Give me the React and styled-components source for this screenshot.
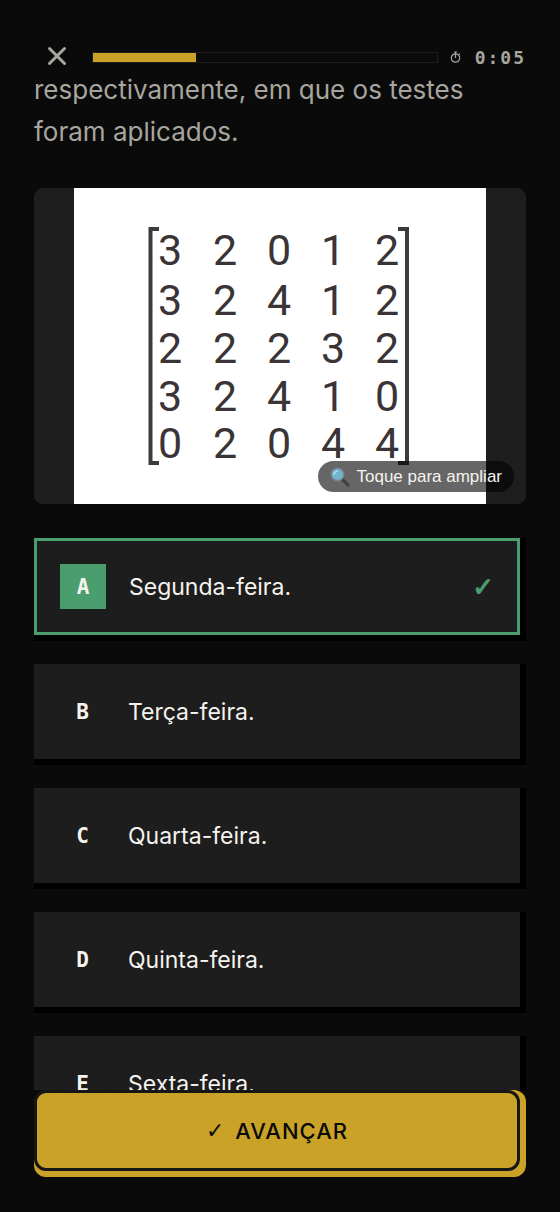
import React, { useState } from 'react'
import styled, { createGlobalStyle } from 'styled-components'
import { X } from 'lucide-react'

const GlobalStyle=createGlobalStyle`
*{
box-sizing: border-box;
}
body{
margin: 0;
background-color: #0a0a0a;
color: #f5f3ee;
font-family: Inter, "Liberation Sans", sans-serif;
}
button{
margin: 0;
padding: 0;
border: none;
background: none;
color: inherit;
font: inherit;
cursor: pointer;
}
`

const Screen=styled.div`
height: 100vh;
display: flex;
flex-direction: column;
overflow: hidden;
`
const Header=styled.header`
display: flex;
align-items: center;
gap: 12px;
padding: 45px 34px 0;
height: 69px;
flex-shrink: 0;
`
const CloseButton=styled.button`
display: flex;
justify-content: center;
width: 46px;
padding-bottom: 2px;
color: #a8a59e;
`
const Track=styled.div`
flex: 1;
height: 11px;
border: 1px solid #1e1e1e;
`
const Fill=styled.div`
height: 100%;
background-color: #c9a227;
`
const Timer=styled.div`
display: flex;
align-items: center;
gap: 14px;
color: #a8a59e;
font-family: "DejaVu Sans Mono", monospace;
font-size: 18px;
font-weight: 700;
letter-spacing: 2px;
`
const Main=styled.main`
flex: 1;
min-height: 0;
overflow: hidden;
padding: 0 34px;
`
const Question=styled.p`
margin: 0 0 35px;
color: #a8a59e;
font-size: 26px;
line-height: 42px;
`
const Figure=styled.button`
position: relative;
display: flex;
justify-content: center;
width: 100%;
height: 316px;
margin-bottom: 34px;
border-radius: 9px;
background-color: #1e1e1e;
overflow: hidden;
`
const ZoomHint=styled.span`
position: absolute;
right: 12px;
bottom: 12px;
display: flex;
align-items: center;
gap: 6px;
height: 31px;
padding: 0 12px;
border-radius: 16px;
background-color: rgba(0, 0, 0, 0.6);
color: #f5f3ee;
font-family: "Liberation Sans", sans-serif;
font-size: 17px;
`
const Options=styled.div`
display: flex;
flex-direction: column;
gap: 23px;
`
const OptionShadow=styled.div`
display: flex;
padding: 0 6px 6px 0;
background-color: #000;
`
const Option=styled.button`
flex: 1;
display: flex;
align-items: center;
gap: 23px;
padding: ${props=>props.$correct ? "23px" : "22px 23px"};
border: 3px solid ${props=>props.$correct ? "#4a9e6e" : "#1d1d1d"};
background-color: #1d1d1d;
text-align: left;
`
const Letter=styled.span`
display: flex;
align-items: center;
justify-content: center;
width: ${props=>props.$correct ? "46px" : "45px"};
height: 45px;
border: 1px solid ${props=>props.$correct ? "#4a9e6e" : "#1a1a1a"};
background-color: ${props=>props.$correct ? "#4a9e6e" : "#1d1d1d"};
font-family: "DejaVu Sans Mono", monospace;
font-size: 21px;
font-weight: 700;
`
const OptionText=styled.span`
flex: 1;
font-size: 23px;
line-height: 36px;
`
const Mark=styled.span`
color: #4a9e6e;
font-family: "DejaVu Sans", sans-serif;
font-size: 26px;
line-height: 36px;
-webkit-text-stroke: 1px #4a9e6e;
`
const Footer=styled.footer`
flex-shrink: 0;
padding: 0 34px 35px;
`
const NextShadow=styled.div`
display: flex;
padding: 0 6px 6px 0;
border-radius: 12px;
background: linear-gradient(90deg, #0a0a0a 12px, #c9a227 12px) top / 100% 12px no-repeat, #c9a227;
`
const NextButton=styled.button`
flex: 1;
display: flex;
align-items: center;
justify-content: center;
gap: 10px;
height: 81px;
border: 3px solid #161616;
border-radius: 12px;
background-color: #c9a227;
color: #0a0a0a;
font-size: 22px;
font-weight: 500;
letter-spacing: 1px;
`
const Tick=styled.span`
font-family: "DejaVu Sans", sans-serif;
font-weight: 400;
`

const rows = [
  [3, 2, 0, 1, 2],
  [3, 2, 4, 1, 2],
  [2, 2, 2, 3, 2],
  [3, 2, 4, 1, 0],
  [0, 2, 0, 4, 4],
]
const columnX = [96, 151, 205, 259, 313]
const rowY = [77, 127, 175, 223, 270]

const options = [
  { id: "A", text: "Segunda-feira." },
  { id: "B", text: "Terça-feira." },
  { id: "C", text: "Quarta-feira." },
  { id: "D", text: "Quinta-feira." },
  { id: "E", text: "Sexta-feira." },
]

const Matrix = () => (
  <svg width="412" height="316" viewBox="0 0 412 316" role="img" aria-label="Matriz 5 por 5">
    <rect width="412" height="316" fill="#fff"/>
    <g fill="none" stroke="#3c3a3a" strokeWidth="4">
      <path d="M85 41H76.500V275H85"/>
      <path d="M324 41H333V275H324"/>
    </g>
    <g fill="#3a3436" fontFamily="Roboto, sans-serif" fontSize="43" textAnchor="middle">
      {rows.map((row, r)=>
        row.map((value, c)=>
          <text key={`${r}-${c}`} x={columnX[c]} y={rowY[r]}>{value}</text>
        )
      )}
    </g>
  </svg>
)

const Magnifier = () => (
  <svg width="20" height="20" viewBox="0 0 20 20" aria-hidden="true">
    <path d="M12 12L18 18" stroke="#3b3f42" strokeWidth="3" strokeLinecap="round"/>
    <circle cx="7.500" cy="7.500" r="6.200" fill="#72b3cf" stroke="#75868e" strokeWidth="1.500"/>
    <path d="M4 7.500A4 4 0 0 1 7.500 4" stroke="#b5dcea" strokeWidth="1.500" fill="none" strokeLinecap="round"/>
  </svg>
)

const Stopwatch = () => (
  <svg width="11" height="12" viewBox="0 0 11 12" fill="none" stroke="currentColor" aria-hidden="true">
    <circle cx="5.500" cy="7" r="4.200" strokeWidth="1.200"/>
    <path d="M5.500 7V1M4 1H7M9 2.500L9.800 3.300" strokeWidth="1.200"/>
  </svg>
)

const App = () => {
  const [progress] = useState(30)
  const correct = "A"
  return (
    <Screen>
      <GlobalStyle/>
      <Header>
        <CloseButton aria-label="Fechar">
          <X size={30} strokeWidth={2.4}/>
        </CloseButton>
        <Track role="progressbar" aria-label="Progresso" aria-valuenow={progress}>
          <Fill style={{ width: `${progress}%` }}/>
        </Track>
        <Timer>
          <Stopwatch/>
          <span>0:05</span>
        </Timer>
      </Header>
      <Main>
        <Question>respectivamente, em que os testes foram aplicados.</Question>
        <Figure>
          <Matrix/>
          <ZoomHint>
            <Magnifier/>
            Toque para ampliar
          </ZoomHint>
        </Figure>
        <Options>
          {options.map(item=>
            <OptionShadow key={item.id}>
              <Option $correct={item.id===correct}>
                <Letter $correct={item.id===correct}>{item.id}</Letter>
                <OptionText>{item.text}</OptionText>
                {item.id===correct && <Mark>✓</Mark>}
              </Option>
            </OptionShadow>
          )}
        </Options>
      </Main>
      <Footer>
        <NextShadow>
          <NextButton>
            <Tick>✓</Tick>
            AVANÇAR
          </NextButton>
        </NextShadow>
      </Footer>
    </Screen>
  )
}

export default App
